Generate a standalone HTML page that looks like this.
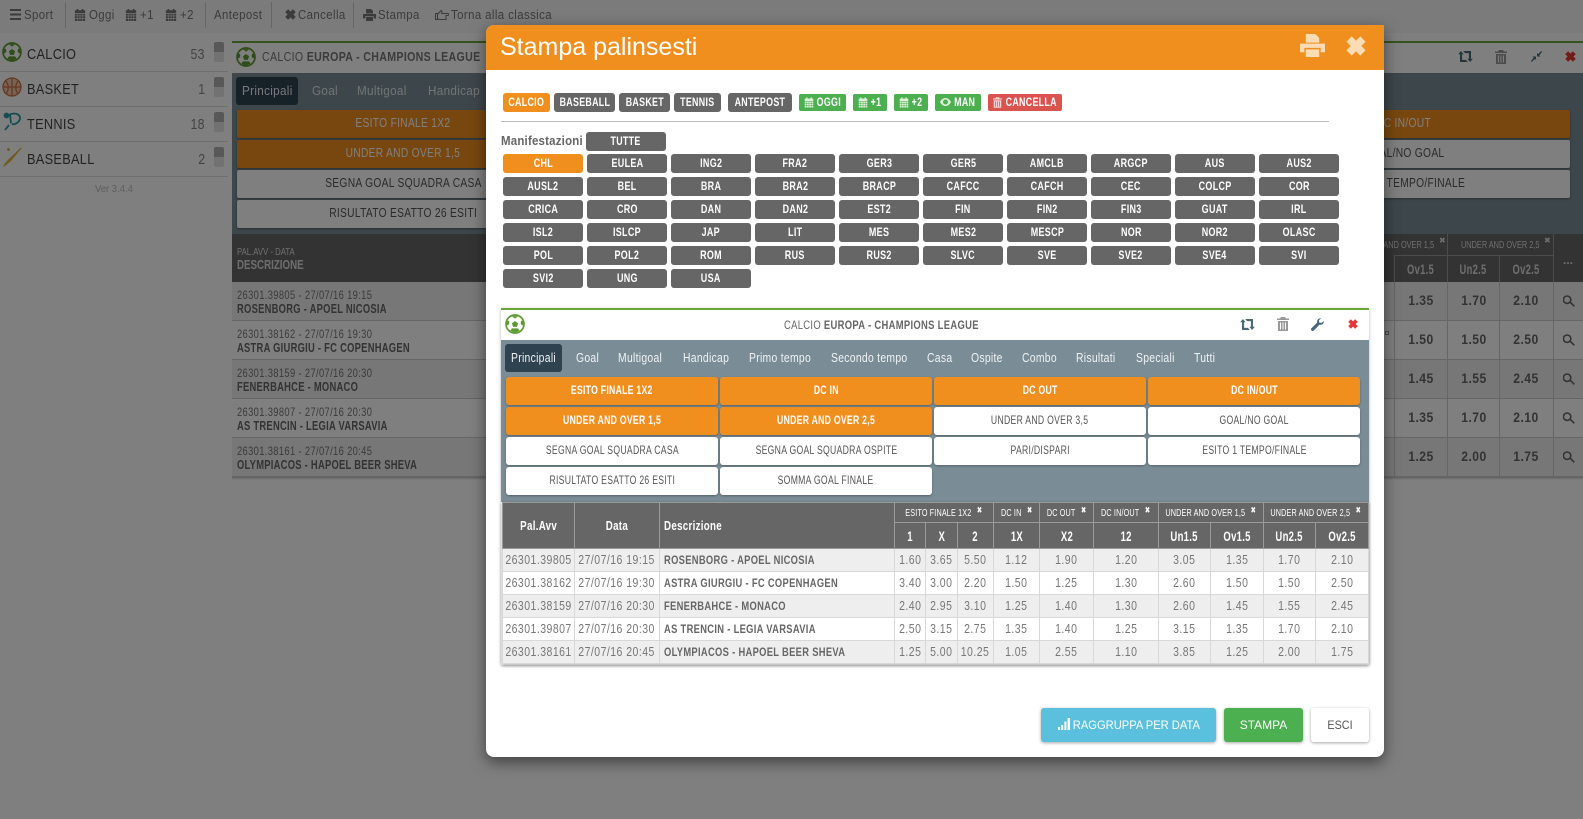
<!DOCTYPE html>
<html lang="it"><head><meta charset="utf-8"><title>Stampa palinsesti</title>
<style>
*{box-sizing:border-box}
html,body{margin:0;padding:0;width:1583px;height:819px;overflow:hidden;background:#fff}
body{position:relative;font-family:"Liberation Sans",sans-serif;color:#666}
.a{position:absolute;white-space:nowrap}
svg{position:absolute;fill:currentColor}
i{display:inline-block;font-style:normal;margin:0 -40px;transform:scaleX(var(--k,.8))}
i.l{margin:0;transform-origin:0 50%}
.tb{top:0;height:30px;line-height:30px;font-size:13px;letter-spacing:.45px;color:#777;transform:scaleX(.88);transform-origin:0 50%}
.sep{top:2px;width:1px;height:26px;background:#ccc}
.sr{left:0;width:228px;height:1px;background:#ddd}
.sl{left:27px;font-size:15px;letter-spacing:.35px;color:#444;line-height:20px;margin-top:1px;transform:scaleX(.85);transform-origin:0 50%}
.sc{right:1378px;font-size:14.5px;letter-spacing:.3px;color:#888;line-height:20px;margin-top:1px;transform:scaleX(.85);transform-origin:100% 50%}
.tg{left:214px;width:10px;height:20px;border-radius:2px;background:linear-gradient(#b0b0b0 50%,#e4e4e4 50%)}
.bgb{--k:.82;height:28px;line-height:26px;text-align:center;font-size:12.5px;letter-spacing:.35px;border-radius:2px;box-shadow:0 1px 2px rgba(0,0,0,.35)}
.o{background:#f18f1e;color:#fff}.w{background:#fff;color:#555}
.tab{font-size:13px;letter-spacing:.35px;color:#f0f3f4;line-height:16px;transform:scaleX(.8);transform-origin:0 50%}
.tab.bt{transform:scaleX(.9)}
.br{left:232px;width:1351px;height:39px;border-bottom:1px solid #ccc}
.meta{position:absolute;left:5px;top:5px;font-size:12px;letter-spacing:.45px;color:#777;line-height:16px;transform:scaleX(.78);transform-origin:0 50%}
.nm{position:absolute;left:5px;top:19px;font-size:12.5px;font-weight:bold;letter-spacing:.35px;color:#666;line-height:16px;transform:scaleX(.75);transform-origin:0 50%}
.val{position:absolute;top:11px;width:50px;text-align:center;font-size:13.5px;font-weight:bold;letter-spacing:.5px;color:#666;line-height:16px;transform:scaleX(.9)}
.vl{width:1px;background:#ccc;top:282px;height:195px}
.f{--k:.77;top:93px;height:19px;line-height:20px;text-align:center;font-size:11.5px;font-weight:bold;letter-spacing:.4px;color:#fff;background:#666;border-radius:3px}
.g{top:94px;height:17px;line-height:18px;background:#4caf50;border-radius:2px}
.grid{left:503px;top:154px;width:840px;display:flex;flex-wrap:wrap}
.grid span{--k:.78;display:block;width:80px;height:19px;margin:0 4px 4px 0;line-height:20px;text-align:center;font-size:11.5px;font-weight:bold;letter-spacing:.4px;color:#fff;background:#666;border-radius:3px}
.grid span.on{background:#f18f1e}
.mb{--k:.72;height:28px;line-height:27px;width:212px;text-align:center;font-size:12px;letter-spacing:.4px;border-radius:3px;box-shadow:0 1px 2px rgba(0,0,0,.3)}
.mb.o{font-weight:bold}
.mt{left:502px;top:502px;width:866px;border-collapse:collapse;table-layout:fixed;box-shadow:0 1px 3px rgba(0,0,0,.35)}
.mt td,.mt th{padding:0;border:1px solid #d8d8d8;text-align:center;overflow:hidden;white-space:nowrap}
.mt th{--k:.75;background:#666;color:#fff;border-color:#9a9a9a;font-weight:bold;font-size:13px;letter-spacing:.4px}
.mt th.s{--k:.69;font-weight:normal;font-size:10.5px;height:20px;letter-spacing:.2px;line-height:16px}
.mt th.s b{font-size:9px;vertical-align:3px;margin-left:8px;font-family:"DejaVu Sans",sans-serif;line-height:10px}
.mt th.h{--k:.68;height:26px;font-size:14px;line-height:16px}
.mt td{--k:.84;height:23px;font-size:12.5px;line-height:16px;letter-spacing:.55px;color:#777}
.mt td.n{--k:.78;text-align:left;padding-left:4px;font-weight:bold;color:#666;font-size:12px;letter-spacing:.4px}
.mt tbody tr:nth-child(odd) td{background:#eee}
.mt tbody tr:nth-child(even) td{background:#fff}
.fb{top:708px;height:34px;line-height:34px;text-align:center;font-size:12px;border-radius:3px;color:#fff;box-shadow:0 1px 3px rgba(0,0,0,.35)}
.hc{top:261px;text-align:center;font-size:14px;font-weight:bold;color:#ddd;letter-spacing:.4px;line-height:16px;transform:scaleX(.67)}
</style></head><body>

<svg width="0" height="0" style="position:absolute">
<symbol id="ball" viewBox="0 0 24 24"><circle cx="12" cy="12" r="10.8" fill="#fff" stroke="#5c9a33" stroke-width="2"/><path fill="#5c9a33" d="M12 8.400l3.700 2.700-1.400 4.300H9.700l-1.400-4.300zM8 2.500h8L12 5.600zM22 8l.6 6.500-3.700-2.300.2-4zM2 8l-.6 6.500 3.700-2.300-.2-4zM6.500 20l1.800-2.800h7.400l1.800 2.800-5.500 2.500z"/></symbol>
<symbol id="cal" viewBox="0 0 14 14"><path d="M3 0h2v2H3zM9 0h2v2H9zM1 1.500h12V5H1zM1 5.800h2.600v2H1zM4.200 5.800h2.500v2H4.200zM7.300 5.800h2.500v2H7.300zM10.400 5.800H13v2h-2.600zM1 8.500h2.600v2H1zM4.200 8.500h2.500v2H4.200zM7.300 8.500h2.500v2H7.300zM10.400 8.500H13v2h-2.600zM1 11.200h2.600V14H1zM4.200 11.200h2.500V14H4.200zM7.300 11.200h2.500V14H7.300zM10.400 11.200H13V14h-2.600z"/></symbol>
<symbol id="x" viewBox="0 0 14 14"><path d="M4 .3L7 3.300 10 .3 13.700 4 10.700 7 13.700 10 10 13.700 7 10.700 4 13.700.3 10 3.300 7 .3 4z"/></symbol>
<symbol id="print" viewBox="0 0 26 24"><path d="M6 0h10l4 4v5H6zM0 10h26v9h-4.500v-4.500h-17V19H0zM6 16h14v8H6z"/></symbol>
<symbol id="rt" viewBox="0 0 16 12"><path d="M3 0l3 3.500H4.300v6.200h4.200l2 2.300H2V3.500H0zM13 12l-3-3.500h1.700V2.300H7.500L5.500 0H14v8.500h2z"/></symbol>
<symbol id="tr" viewBox="0 0 12 14"><path d="M4 0h4l1 1.500h3V3H0V1.500h3zM1 4h10v10H1zM3 5.500v7h1v-7zM5.500 5.500v7h1v-7zM8 5.500v7h1v-7z" fill-rule="evenodd"/></symbol>
<symbol id="wr" viewBox="0 0 14 14"><path d="M13.700 3.200c.5 2.300-1.500 4.800-4.500 4L3 13.400c-.8.800-1.800.8-2.500 0s-.8-1.700 0-2.400l6.200-6.200C6 2 8.500 0 10.800.3L8.600 2.500l.3 2.500 2.500.3z"/></symbol>
<symbol id="sr" viewBox="0 0 12 12"><path fill="none" stroke="currentColor" stroke-width="1.600" d="M7.800 4.700a3.700 3.700 0 1 1-7.400 0 3.700 3.700 0 0 1 7.400 0zM7.300 7.300l4 4"/></symbol>
</svg>

<!-- toolbar -->
<div class="a" style="left:0;top:0;width:1583px;height:33px;background:#f7f7f7"></div>
<svg style="left:10px;top:9px;color:#777" width="11" height="11" viewBox="0 0 11 11"><path d="M0 0h11v2H0zM0 4.500h11v2H0zM0 9h11v2H0z"/></svg>
<div class="a tb" style="left:24px">Sport</div><div class="a sep" style="left:65px"></div>
<svg style="left:74px;top:9px;color:#777" width="12" height="12"><use href="#cal"/></svg><div class="a tb" style="left:89px">Oggi</div>
<svg style="left:125px;top:9px;color:#777" width="12" height="12"><use href="#cal"/></svg><div class="a tb" style="left:140px">+1</div>
<svg style="left:165px;top:9px;color:#777" width="12" height="12"><use href="#cal"/></svg><div class="a tb" style="left:180px">+2</div>
<div class="a sep" style="left:205px"></div><div class="a tb" style="left:214px">Antepost</div><div class="a sep" style="left:271px"></div>
<svg style="left:285px;top:9px;color:#777" width="11" height="11"><use href="#x"/></svg><div class="a tb" style="left:298px">Cancella</div><div class="a sep" style="left:353px"></div>
<svg style="left:363px;top:9px;color:#777" width="13" height="12"><use href="#print"/></svg><div class="a tb" style="left:378px">Stampa</div>
<svg style="left:435px;top:10px;color:#777" width="14" height="11" viewBox="0 0 14 11"><path fill="none" stroke="currentColor" d="M.5 3.500h2v6h-2zM3 4l3-3.500 1 .5-.5 2.500H13c.7 0 .7 2 0 2h-2v4H5L3 9"/></svg><div class="a tb" style="left:451px">Torna alla classica</div>

<!-- sidebar -->
<svg style="left:2px;top:42px" width="20" height="20"><use href="#ball"/></svg>
<svg style="left:2px;top:77px" width="20" height="20" viewBox="0 0 20 20"><g fill="none" stroke="#c9714a" stroke-width="1.300"><circle cx="10" cy="10" r="9" fill="#f0c8a8"/><path d="M1 10h18M10 1v18M3.500 4c3 2 4 9 .5 12.500M16.500 4c-3 2-4 9-.5 12.500"/></g></svg>
<svg style="left:3px;top:112px" width="19" height="20" viewBox="0 0 19 20"><g fill="none" stroke="#2a9aa8" stroke-width="1.800"><path d="M6 3c5-3 11-1 11 3s-5 7-8 6M7 2.500l1 9M6 13l-4 5"/><circle cx="3.500" cy="3.500" r="2" fill="#2a9aa8"/></g></svg>
<svg style="left:2px;top:147px" width="20" height="20" viewBox="0 0 20 20"><path d="M19 .5l.7.8-11 13-3 2.500-3.700 3-.8-.8 2.600-3.700 2.700-3z" fill="#e0b440"/><circle cx="6.500" cy="2.500" r="1.500" fill="#e0b440"/></svg>
<div class="a sl" style="top:44px">CALCIO</div><div class="a sc" style="top:44px">53</div><div class="a tg" style="top:42px"></div><div class="a sr" style="top:71px"></div>
<div class="a sl" style="top:79px">BASKET</div><div class="a sc" style="top:79px">1</div><div class="a tg" style="top:77px"></div><div class="a sr" style="top:106px"></div>
<div class="a sl" style="top:114px">TENNIS</div><div class="a sc" style="top:114px">18</div><div class="a tg" style="top:112px"></div><div class="a sr" style="top:141px"></div>
<div class="a sl" style="top:149px">BASEBALL</div><div class="a sc" style="top:149px">2</div><div class="a tg" style="top:147px"></div><div class="a sr" style="top:176px"></div>
<div class="a" style="left:95px;top:183px;font-size:10.5px;color:#bbb;line-height:12px;transform:scaleX(.9);transform-origin:0 50%">Ver 3.4.4</div>

<!-- background panel -->
<div class="a" style="left:232px;top:41px;width:1351px;height:32px;background:#fff;border-top:2px solid #6aa63a"></div>
<svg style="left:236px;top:47px" width="20" height="20"><use href="#ball"/></svg>
<div class="a" style="left:262px;top:49px;font-size:13px;letter-spacing:.4px;color:#777;line-height:16px;transform:scaleX(.816);transform-origin:0 50%">CALCIO <b>EUROPA - CHAMPIONS LEAGUE</b></div>
<svg style="left:1458px;top:51px;color:#4a6a78" width="15" height="11"><use href="#rt"/></svg>
<svg style="left:1495px;top:50px;color:#999" width="12" height="14"><use href="#tr"/></svg>
<svg style="left:1531px;top:51px;color:#4a6a78" width="11" height="11" viewBox="0 0 11 11"><path d="M11 .8L10.200 0 7 3.200 6 2v3.500h3.500L8.300 4.500zM0 10.200l.8.8L4 7.800 5 9V5.500H1.500l1.200 1z"/></svg>
<svg style="left:1565px;top:51px;color:#e53935" width="11" height="11"><use href="#x"/></svg>
<div class="a" style="left:232px;top:73px;width:1351px;height:161px;background:#7a8d97"></div>
<div class="a" style="left:236px;top:77px;width:62px;height:28px;background:#2f4250;border-radius:3px"></div>
<div class="a tab bt" style="left:242px;top:83px">Principali</div><div class="a tab bt" style="left:312px;top:83px;opacity:.9">Goal</div><div class="a tab bt" style="left:357px;top:83px;opacity:.9">Multigoal</div><div class="a tab bt" style="left:428px;top:83px;opacity:.9">Handicap</div>
<div class="a bgb o" style="left:237px;top:110px;width:332px"><i>ESITO FINALE 1X2</i></div>
<div class="a bgb o" style="left:237px;top:140px;width:332px"><i>UNDER AND OVER 1,5</i></div>
<div class="a bgb w" style="left:237px;top:170px;width:332px"><i>SEGNA GOAL SQUADRA CASA</i></div>
<div class="a bgb w" style="left:237px;top:200px;width:332px"><i>RISULTATO ESATTO 26 ESITI</i></div>
<div class="a bgb o" style="left:1237px;top:110px;width:333px"><i>DC IN/OUT</i></div>
<div class="a bgb w" style="left:1237px;top:140px;width:333px"><i>GOAL/NO GOAL</i></div>
<div class="a bgb w" style="left:1237px;top:170px;width:333px"><i>ESITO 1 TEMPO/FINALE</i></div>
<div class="a" style="left:232px;top:234px;width:1351px;height:48px;background:#666"></div>
<div class="a" style="left:237px;top:246px;font-size:10.5px;color:#ddd;line-height:12px;transform:scaleX(.74);transform-origin:0 50%">PAL.AVV - DATA</div>
<div class="a" style="left:237px;top:257px;font-size:13px;font-weight:bold;color:#ddd;line-height:16px;transform:scaleX(.75);transform-origin:0 50%">DESCRIZIONE</div>
<div class="a" style="right:149px;top:239px;font-size:10.5px;color:#ddd;line-height:12px;transform:scaleX(.7);transform-origin:100% 50%">UNDER AND OVER 1,5</div>
<div class="a" style="left:1439px;top:236px;font-size:8px;color:#ddd;font-family:'DejaVu Sans',sans-serif">✖</div>
<div class="a" style="left:1461px;top:239px;font-size:10.5px;color:#ddd;line-height:12px;transform:scaleX(.7);transform-origin:0 50%">UNDER AND OVER 2,5</div>
<div class="a" style="left:1544px;top:236px;font-size:8px;color:#ddd;font-family:'DejaVu Sans',sans-serif">✖</div>
<div class="a" style="left:1394px;top:255px;width:159px;height:1px;background:#999"></div>
<div class="a" style="left:1394px;top:255px;width:1px;height:27px;background:#999"></div>
<div class="a" style="left:1447px;top:234px;width:1px;height:48px;background:#999"></div>
<div class="a" style="left:1499px;top:255px;width:1px;height:27px;background:#999"></div>
<div class="a" style="left:1553px;top:234px;width:1px;height:48px;background:#999"></div>
<div class="a hc" style="left:1394px;width:53px">Ov1.5</div>
<div class="a hc" style="left:1447px;width:52px">Un2.5</div>
<div class="a hc" style="left:1499px;width:54px">Ov2.5</div>
<div class="a" style="left:1553px;top:252px;width:30px;text-align:center;font-size:12px;font-weight:bold;color:#ddd;line-height:16px">...</div>

<div class="a br" style="top:282px;background:#eee"><span class="meta">26301.39805 - 27/07/16 19:15</span><span class="nm">ROSENBORG - APOEL NICOSIA</span><span class="val" style="left:1164px">1.35</span><span class="val" style="left:1217px">1.70</span><span class="val" style="left:1269px">2.10</span><svg style="left:1331px;top:13px;color:#666" width="12" height="12"><use href="#sr"/></svg></div>
<div class="a br" style="top:321px;background:#fff"><span class="meta">26301.38162 - 27/07/16 19:30</span><span class="nm">ASTRA GIURGIU - FC COPENHAGEN</span><span class="val" style="left:1164px">1.50</span><span class="val" style="left:1217px">1.50</span><span class="val" style="left:1269px">2.50</span><svg style="left:1331px;top:13px;color:#666" width="12" height="12"><use href="#sr"/></svg></div>
<div class="a br" style="top:360px;background:#eee"><span class="meta">26301.38159 - 27/07/16 20:30</span><span class="nm">FENERBAHCE - MONACO</span><span class="val" style="left:1164px">1.45</span><span class="val" style="left:1217px">1.55</span><span class="val" style="left:1269px">2.45</span><svg style="left:1331px;top:13px;color:#666" width="12" height="12"><use href="#sr"/></svg></div>
<div class="a br" style="top:399px;background:#fff"><span class="meta">26301.39807 - 27/07/16 20:30</span><span class="nm">AS TRENCIN - LEGIA VARSAVIA</span><span class="val" style="left:1164px">1.35</span><span class="val" style="left:1217px">1.70</span><span class="val" style="left:1269px">2.10</span><svg style="left:1331px;top:13px;color:#666" width="12" height="12"><use href="#sr"/></svg></div>
<div class="a br" style="top:438px;background:#eee"><span class="meta">26301.38161 - 27/07/16 20:45</span><span class="nm">OLYMPIACOS - HAPOEL BEER SHEVA</span><span class="val" style="left:1164px">1.25</span><span class="val" style="left:1217px">2.00</span><span class="val" style="left:1269px">1.75</span><svg style="left:1331px;top:13px;color:#666" width="12" height="12"><use href="#sr"/></svg></div>
<div class="a vl" style="left:1394px"></div><div class="a vl" style="left:1447px"></div><div class="a vl" style="left:1499px"></div><div class="a vl" style="left:1553px"></div>
<div class="a" style="left:232px;top:477px;width:1351px;height:3px;background:linear-gradient(rgba(0,0,0,.25),transparent)"></div>
<div class="a" style="left:1385px;top:331px;width:4px;height:4px;background:#fff;border:1px solid #999"></div>

<!-- overlay -->
<div class="a" style="left:0;top:0;width:1583px;height:819px;background:rgba(0,0,0,.5)"></div>

<!-- modal -->
<div class="a" style="left:486px;top:25px;width:898px;height:732px;background:#fff;border-radius:8px 2px 8px 8px;box-shadow:0 5px 15px rgba(0,0,0,.5)"></div>
<div class="a" style="left:486px;top:25px;width:898px;height:45px;background:#f18f1e;border-radius:8px 2px 0 0"></div>
<div class="a" style="left:500px;top:31px;font-size:25px;line-height:32px;color:#fff">Stampa palinsesti</div>
<svg style="left:1300px;top:34px;color:#fbdcb5" width="25" height="23"><use href="#print"/></svg>
<svg style="left:1346px;top:36px;color:#fbdcb5" width="20" height="20"><use href="#x"/></svg>

<div class="a f" style="left:503px;width:47px;background:#f18f1e"><i>CALCIO</i></div>
<div class="a f" style="left:554px;width:61px"><i>BASEBALL</i></div>
<div class="a f" style="left:619px;width:51px"><i>BASKET</i></div>
<div class="a f" style="left:674px;width:47px"><i>TENNIS</i></div>
<div class="a f" style="left:728px;width:64px"><i>ANTEPOST</i></div>
<div class="a f g" style="left:799px;width:47px;padding-left:13px"><i>OGGI</i></div>
<svg style="left:804px;top:97px;color:#dff0d8" width="10" height="11"><use href="#cal"/></svg>
<div class="a f g" style="left:853px;width:34px;padding-left:12px"><i>+1</i></div>
<svg style="left:858px;top:97px;color:#dff0d8" width="10" height="11"><use href="#cal"/></svg>
<div class="a f g" style="left:894px;width:34px;padding-left:12px"><i>+2</i></div>
<svg style="left:899px;top:97px;color:#dff0d8" width="10" height="11"><use href="#cal"/></svg>
<div class="a f g" style="left:935px;width:46px;padding-left:13px"><i>MAN</i></div>
<svg style="left:940px;top:98px;color:#dff0d8" width="11" height="8" viewBox="0 0 11 8"><path fill-rule="evenodd" d="M5.500 0C8.500 0 10.300 2.500 11 4c-.7 1.500-2.500 4-5.500 4S.7 5.500 0 4c.7-1.500 2.500-4 5.500-4zm0 1.500a2.500 2.500 0 1 0 0 5 2.500 2.500 0 0 0 0-5z"/></svg>
<div class="a f g" style="left:988px;width:74px;padding-left:12px;background:#d9534f"><i>CANCELLA</i></div>
<svg style="left:993px;top:97px;color:#f5d5d4" width="9" height="11"><use href="#tr"/></svg>
<div class="a" style="left:501px;top:121px;width:828px;height:1px;background:#bbb"></div>
<div class="a" style="left:501px;top:133px;font-size:13px;font-weight:bold;letter-spacing:.25px;line-height:16px;color:#666;transform:scaleX(.88);transform-origin:0 50%">Manifestazioni</div>
<div class="a f" style="left:586px;top:132px;width:80px"><i>TUTTE</i></div>

<div class="a grid"><span class="on"><i>CHL</i></span><span><i>EULEA</i></span><span><i>ING2</i></span><span><i>FRA2</i></span><span><i>GER3</i></span><span><i>GER5</i></span><span><i>AMCLB</i></span><span><i>ARGCP</i></span><span><i>AUS</i></span><span><i>AUS2</i></span><span><i>AUSL2</i></span><span><i>BEL</i></span><span><i>BRA</i></span><span><i>BRA2</i></span><span><i>BRACP</i></span><span><i>CAFCC</i></span><span><i>CAFCH</i></span><span><i>CEC</i></span><span><i>COLCP</i></span><span><i>COR</i></span><span><i>CRICA</i></span><span><i>CRO</i></span><span><i>DAN</i></span><span><i>DAN2</i></span><span><i>EST2</i></span><span><i>FIN</i></span><span><i>FIN2</i></span><span><i>FIN3</i></span><span><i>GUAT</i></span><span><i>IRL</i></span><span><i>ISL2</i></span><span><i>ISLCP</i></span><span><i>JAP</i></span><span><i>LIT</i></span><span><i>MES</i></span><span><i>MES2</i></span><span><i>MESCP</i></span><span><i>NOR</i></span><span><i>NOR2</i></span><span><i>OLASC</i></span><span><i>POL</i></span><span><i>POL2</i></span><span><i>ROM</i></span><span><i>RUS</i></span><span><i>RUS2</i></span><span><i>SLVC</i></span><span><i>SVE</i></span><span><i>SVE2</i></span><span><i>SVE4</i></span><span><i>SVI</i></span><span><i>SVI2</i></span><span><i>UNG</i></span><span><i>USA</i></span></div>

<!-- inner panel -->
<div class="a" style="left:501px;top:308px;width:868px;height:357px;box-shadow:0 1px 3px rgba(0,0,0,.3);border-radius:2px"></div>
<div class="a" style="left:501px;top:308px;width:868px;height:32px;background:#fff;border-top:2px solid #6aa63a"></div>
<svg style="left:505px;top:314px" width="20" height="20"><use href="#ball"/></svg>
<div class="a" style="left:784px;top:317px;font-size:12px;letter-spacing:.4px;color:#666;line-height:16px;transform:scaleX(.785);transform-origin:0 50%">CALCIO <b>EUROPA - CHAMPIONS LEAGUE</b></div>
<svg style="left:1240px;top:319px;color:#4a6a78" width="15" height="11"><use href="#rt"/></svg>
<svg style="left:1277px;top:317px;color:#999" width="12" height="14"><use href="#tr"/></svg>
<svg style="left:1311px;top:318px;color:#4a6a78" width="13" height="13"><use href="#wr"/></svg>
<svg style="left:1348px;top:319px;color:#e53935" width="10" height="10"><use href="#x"/></svg>
<div class="a" style="left:501px;top:340px;width:868px;height:162px;background:#7a8d97"></div>
<div class="a" style="left:505px;top:344px;width:57px;height:28px;background:#2f4250;border-radius:3px"></div>
<div class="a tab" style="left:511px;top:350px">Principali</div>
<div class="a tab" style="left:576px;top:350px">Goal</div>
<div class="a tab" style="left:618px;top:350px">Multigoal</div>
<div class="a tab" style="left:683px;top:350px">Handicap</div>
<div class="a tab" style="left:749px;top:350px">Primo tempo</div>
<div class="a tab" style="left:831px;top:350px">Secondo tempo</div>
<div class="a tab" style="left:927px;top:350px">Casa</div>
<div class="a tab" style="left:971px;top:350px">Ospite</div>
<div class="a tab" style="left:1022px;top:350px">Combo</div>
<div class="a tab" style="left:1076px;top:350px">Risultati</div>
<div class="a tab" style="left:1136px;top:350px">Speciali</div>
<div class="a tab" style="left:1194px;top:350px">Tutti</div>

<div class="a mb o" style="left:506px;top:377px"><i>ESITO FINALE 1X2</i></div>
<div class="a mb o" style="left:720px;top:377px"><i>DC IN</i></div>
<div class="a mb o" style="left:934px;top:377px"><i>DC OUT</i></div>
<div class="a mb o" style="left:1148px;top:377px"><i>DC IN/OUT</i></div>
<div class="a mb o" style="left:506px;top:407px"><i>UNDER AND OVER 1,5</i></div>
<div class="a mb o" style="left:720px;top:407px"><i>UNDER AND OVER 2,5</i></div>
<div class="a mb w" style="left:934px;top:407px"><i>UNDER AND OVER 3,5</i></div>
<div class="a mb w" style="left:1148px;top:407px"><i>GOAL/NO GOAL</i></div>
<div class="a mb w" style="left:506px;top:437px"><i>SEGNA GOAL SQUADRA CASA</i></div>
<div class="a mb w" style="left:720px;top:437px"><i>SEGNA GOAL SQUADRA OSPITE</i></div>
<div class="a mb w" style="left:934px;top:437px"><i>PARI/DISPARI</i></div>
<div class="a mb w" style="left:1148px;top:437px"><i>ESITO 1 TEMPO/FINALE</i></div>
<div class="a mb w" style="left:506px;top:467px"><i>RISULTATO ESATTO 26 ESITI</i></div>
<div class="a mb w" style="left:720px;top:467px"><i>SOMMA GOAL FINALE</i></div>

<table class="a mt">
<colgroup><col style="width:72px"><col style="width:85px"><col style="width:235px"><col style="width:31px"><col style="width:32px"><col style="width:36px"><col style="width:46px"><col style="width:54px"><col style="width:65px"><col style="width:52px"><col style="width:53px"><col style="width:52px"><col style="width:53px"></colgroup>
<thead>
<tr><th rowspan="2"><i>Pal.Avv</i></th><th rowspan="2"><i>Data</i></th><th rowspan="2" style="text-align:left;padding-left:4px"><i class="l">Descrizione</i></th><th colspan="3" class="s"><i>ESITO FINALE 1X2<b>✖</b></i></th><th class="s"><i>DC IN<b>✖</b></i></th><th class="s"><i>DC OUT<b>✖</b></i></th><th class="s"><i>DC IN/OUT<b>✖</b></i></th><th colspan="2" class="s"><i>UNDER AND OVER 1,5<b>✖</b></i></th><th colspan="2" class="s"><i>UNDER AND OVER 2,5<b>✖</b></i></th></tr>
<tr><th class="h"><i>1</i></th><th class="h"><i>X</i></th><th class="h"><i>2</i></th><th class="h"><i>1X</i></th><th class="h"><i>X2</i></th><th class="h"><i>12</i></th><th class="h"><i>Un1.5</i></th><th class="h"><i>Ov1.5</i></th><th class="h"><i>Un2.5</i></th><th class="h"><i>Ov2.5</i></th></tr>
</thead>
<tbody>
<tr><td><i>26301.39805</i></td><td><i>27/07/16 19:15</i></td><td class="n"><i class="l">ROSENBORG - APOEL NICOSIA</i></td><td><i>1.60</i></td><td><i>3.65</i></td><td><i>5.50</i></td><td><i>1.12</i></td><td><i>1.90</i></td><td><i>1.20</i></td><td><i>3.05</i></td><td><i>1.35</i></td><td><i>1.70</i></td><td><i>2.10</i></td></tr>
<tr><td><i>26301.38162</i></td><td><i>27/07/16 19:30</i></td><td class="n"><i class="l">ASTRA GIURGIU - FC COPENHAGEN</i></td><td><i>3.40</i></td><td><i>3.00</i></td><td><i>2.20</i></td><td><i>1.50</i></td><td><i>1.25</i></td><td><i>1.30</i></td><td><i>2.60</i></td><td><i>1.50</i></td><td><i>1.50</i></td><td><i>2.50</i></td></tr>
<tr><td><i>26301.38159</i></td><td><i>27/07/16 20:30</i></td><td class="n"><i class="l">FENERBAHCE - MONACO</i></td><td><i>2.40</i></td><td><i>2.95</i></td><td><i>3.10</i></td><td><i>1.25</i></td><td><i>1.40</i></td><td><i>1.30</i></td><td><i>2.60</i></td><td><i>1.45</i></td><td><i>1.55</i></td><td><i>2.45</i></td></tr>
<tr><td><i>26301.39807</i></td><td><i>27/07/16 20:30</i></td><td class="n"><i class="l">AS TRENCIN - LEGIA VARSAVIA</i></td><td><i>2.50</i></td><td><i>3.15</i></td><td><i>2.75</i></td><td><i>1.35</i></td><td><i>1.40</i></td><td><i>1.25</i></td><td><i>3.15</i></td><td><i>1.35</i></td><td><i>1.70</i></td><td><i>2.10</i></td></tr>
<tr><td><i>26301.38161</i></td><td><i>27/07/16 20:45</i></td><td class="n"><i class="l">OLYMPIACOS - HAPOEL BEER SHEVA</i></td><td><i>1.25</i></td><td><i>5.00</i></td><td><i>10.25</i></td><td><i>1.05</i></td><td><i>2.55</i></td><td><i>1.10</i></td><td><i>3.85</i></td><td><i>1.25</i></td><td><i>2.00</i></td><td><i>1.75</i></td></tr>
</tbody></table>

<div class="a fb" style="left:1041px;width:175px;background:#5bc0de;padding-left:15px"><i style="--k:.93">RAGGRUPPA PER DATA</i></div>
<svg style="left:1058px;top:718px;color:#fff" width="12" height="12" viewBox="0 0 12 12"><path d="M0 9h2v3H0zM3.200 7h2v5h-2zM6.400 3.500h2V12h-2zM9.600 0H12v12H9.600z"/></svg>
<div class="a fb" style="left:1224px;width:79px;background:#4caf50">STAMPA</div>
<div class="a fb" style="left:1311px;width:58px;background:#fff;color:#555"><i style="--k:.9">ESCI</i></div>
</body></html>
